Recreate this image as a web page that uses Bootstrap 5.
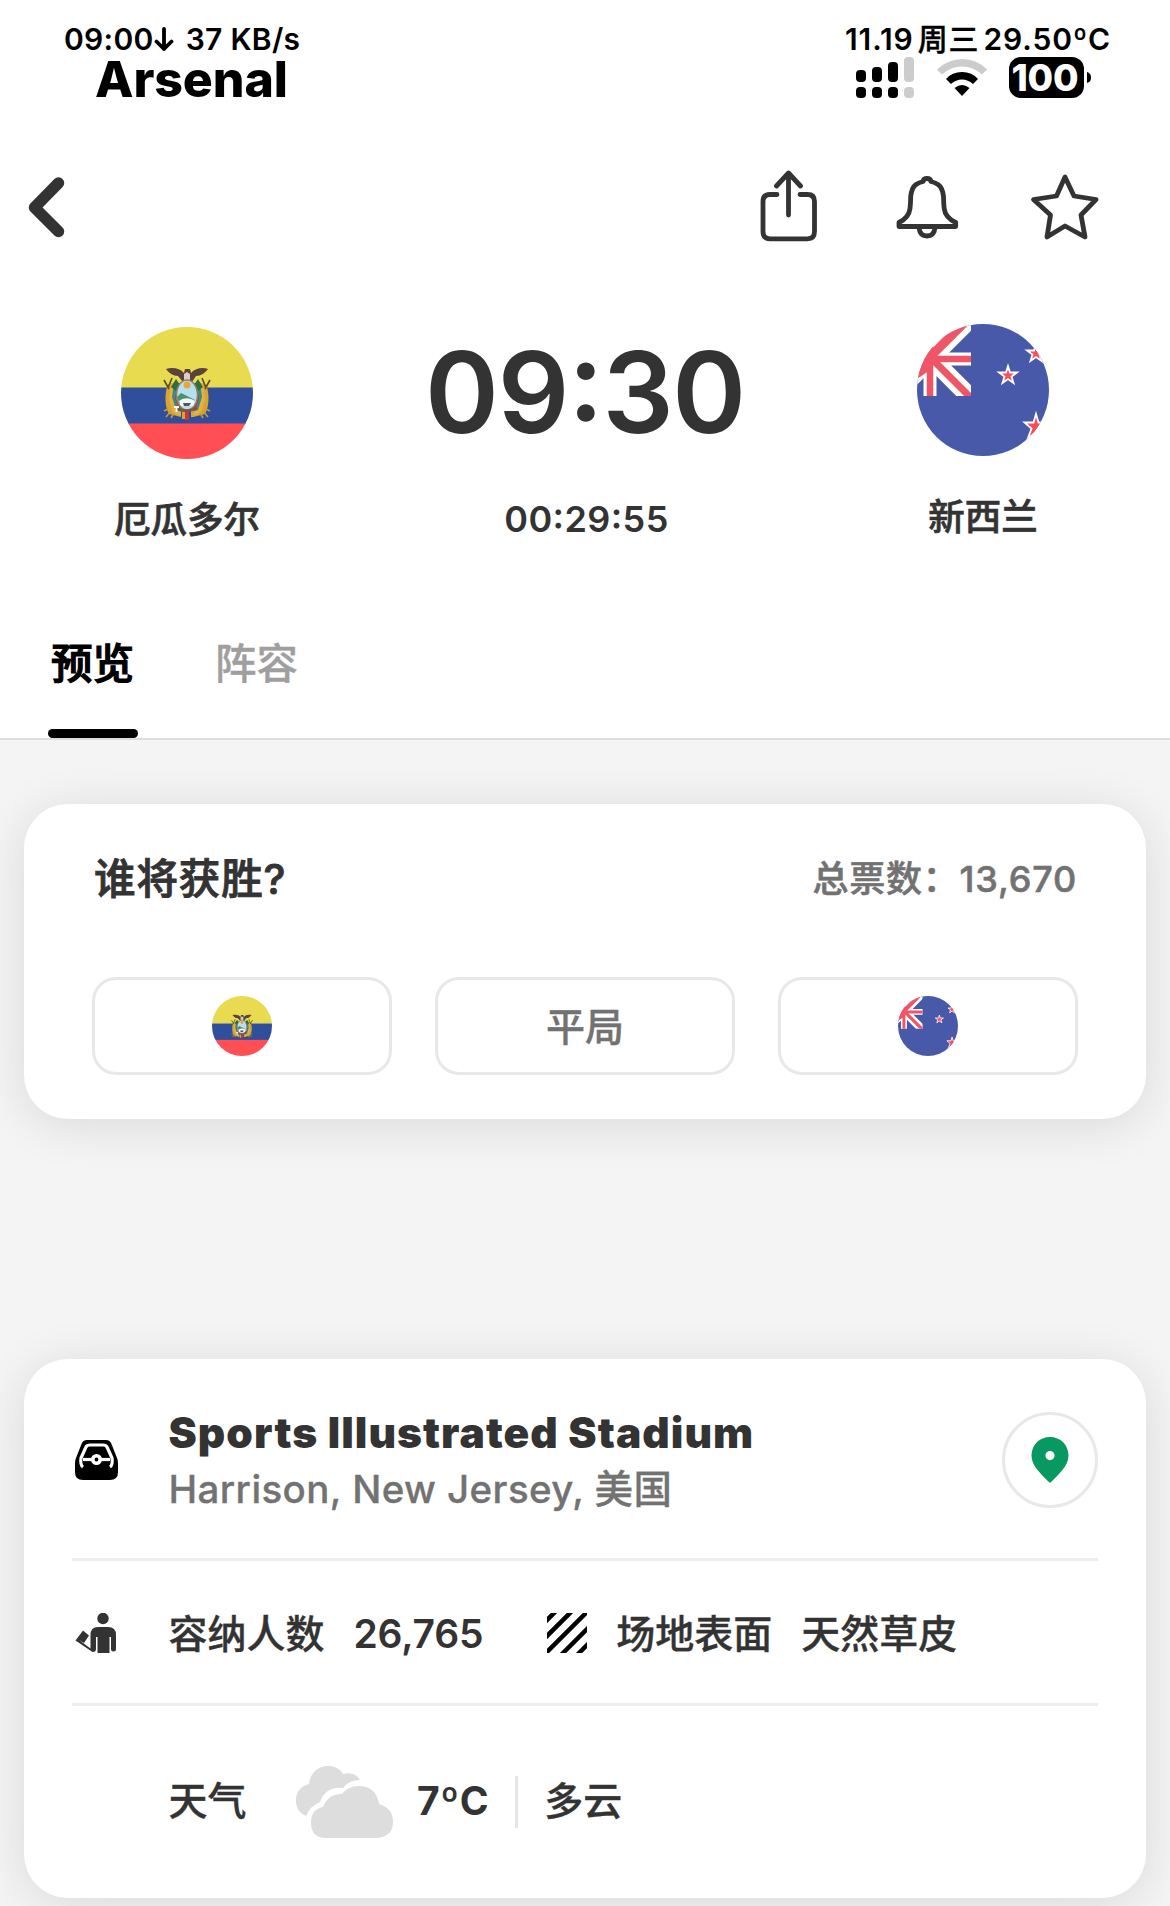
<!DOCTYPE html>
<html lang="zh-CN">
<head>
    <meta charset="UTF-8">
    <meta name="viewport" content="width=device-width, initial-scale=1.0">
    <title>厄瓜多尔 - 新西兰</title>
    <link href="https://cdn.jsdelivr.net/npm/bootstrap@5.3.0/dist/css/bootstrap.min.css" rel="stylesheet">
    <style>
        body {
            font-family: Inter, "Noto Sans CJK SC", sans-serif;
            background: #f4f4f4;
            color: #333;
            line-height: 1;
            overflow-x: hidden;
        }
        svg { display: block; flex: none; }
        .t { white-space: nowrap; }
        /* Reforça um pouco o traço dos caracteres chineses */
        .cn { font-weight: 500; -webkit-text-stroke: .35px currentColor; }

        /* Barra de status */
        .status-bar { height: 130px; padding: 22px 60px 0 64px; color: #000; }
        .status-line { font-size: 30px; height: 34px; line-height: 34px; font-weight: 600; letter-spacing: .3px; }
        .status-right { width: 265px; }
        .date-line { letter-spacing: .9px; }
        .carrier { font-size: 50px; height: 46px; line-height: 46px; font-weight: 800; padding-left: 31px; letter-spacing: -.1px; }
        .status-icons { padding-left: 11px; height: 42px; margin-top: 1px; }
        .wifi { margin: 0 17px 0 17px; }

        /* Cabeçalho */
        .app-top { height: 154px; padding: 0 70px 0 26px; }
        .back-icon { margin-top: 45px; }
        .action-icons { margin-top: 38px; }
        .match-head { height: 318px; padding-top: 40px; }
        .team-col { width: 374px; }
        .home-team { padding-top: 3px; }
        .team-name { font-size: 36.5px; height: 44px; line-height: 44px; margin-top: 39px; -webkit-text-stroke-width: .7px; }
        .kickoff, .countdown { font-weight: 600; font-feature-settings: "calt" 1; }
        .kickoff { font-size: 112px; height: 120px; line-height: 120px; letter-spacing: -1.3px; }
        .countdown { font-size: 36px; height: 44px; line-height: 44px; margin-top: 45px; letter-spacing: .4px; padding-left: 3px; }

        /* Abas */
        .tab-bar { height: 138px; padding-left: 48px; border-bottom: 2px solid #ddd; gap: 77px; }
        .tab-item { width: 90px; font-size: 41.5px; color: #9f9f9f; line-height: 60px; padding-top: 32px; }
        .tab-item.active { color: #000; -webkit-text-stroke-width: 1.2px; }
        .tab-label { padding-left: 3px; }
        .tab-line { height: 9px; border-radius: 5px; background: #000; }

        /* Cartões */
        .panel { margin: 0 24px; background: #fff; border-radius: 44px; box-shadow: 0 6px 50px rgba(0, 0, 0, .11); }
        .vote-panel { margin-top: 64px; height: 315px; padding: 48px 68px 0 68px; }
        .vote-title { font-size: 41.5px; line-height: 54px; letter-spacing: .9px; padding-left: 2px; -webkit-text-stroke-width: .9px; }
        .vote-total { font-size: 36px; color: #727272; line-height: 54px; letter-spacing: .8px; padding-right: 1px; -webkit-text-stroke-width: .6px; }
        .vote-btn { height: 98px; border: 3px solid #e8e8e8; border-radius: 24px; background: #fff; color: #727272; font-size: 39px; }
        .vote-row { gap: 43px; margin-top: 71px; }
        .venue-panel { margin-top: 240px; margin-bottom: 8px; height: 539px; padding: 0 48px; }
        .venue-row { border-bottom: 3px solid #eee; padding-top: 2px; }
        .row-main { height: 202px; }
        .row-facts { height: 145px; }
        .row-weather { height: 192px; padding-bottom: 3px; }
        .venue-name { font-size: 42.5px; font-weight: 900; line-height: 56px; letter-spacing: 1.05px; }
        .venue-city { font-size: 38.5px; font-weight: 500; color: #727272; line-height: 56px; letter-spacing: .4px; -webkit-text-stroke: .3px currentColor; }
        .venue-label { padding-top: 2px; }
        .venue-text { font-size: 39px; }
        .icon-cell { width: 96.5px; padding-left: 3px; flex: none; }
        .grass-icon { margin-left: 49px; }
        .fact-value { margin-left: 29px; font-weight: 600; letter-spacing: -.2px; }
        .surface-value { margin-left: 29px; }
        .pin-btn { width: 96px; height: 96px; border: 3px solid #e8e8e8; border-radius: 50%; }
        .cloud-icon { margin: 3px 23px 0 49.5px; }
        .temp-value { letter-spacing: .6px; }
        .weather-sep { width: 3px; height: 52px; background: #e5e5e5; margin: 3px 26px 0 26px; }
    </style>
</head>
<body>
    <!-- Símbolos usados mais de uma vez -->
    <svg width="0" height="0" class="position-absolute">
        <defs>
            <clipPath id="round"><circle cx="66" cy="66" r="66"/></clipPath>
            <symbol id="flag-ec" viewBox="0 0 132 132">
                <g clip-path="url(#round)">
                    <rect width="132" height="61" fill="#e8db50"/>
                    <rect y="60.500" width="132" height="37" fill="#2f4e9b"/>
                    <rect y="96.500" width="132" height="36" fill="#ff4f54"/>
                    <!-- brasão -->
                    <path d="M47 57C43 68 44 80 48 87l12 3V57zM85 57c4 11 3 23-1 30l-12 3V57z" fill="#d9a52e"/>
                    <path d="M50 56l-2 16 4 14 8 3V56zM82 56l2 16-4 14-8 3V56z" fill="#e0b443"/>
                    <path d="M53 56l-2 14 4 13 6 2V56zM79 56l2 14-4 13-6 2V56z" fill="#3b8a86"/>
                    <path d="M56 60l-2 12 4 11 3-2V60zM76 60l2 12-4 11-3-2V60z" fill="#c8323c"/>
                    <path d="M43 53l5 9M51 51l-4 10M89 53l-5 9M81 51l4 10" stroke="#5d4a2c" stroke-width="1.600"/>
                    <path d="M50 84l-5 6M47 82l-4 2M82 84l5 6M85 82l4 2M53 86l-3 5M79 86l3 5" stroke="#c79a3a" stroke-width="1.600"/>
                    <path d="M50 60l5-8 4 6-4 6zM82 60l-5-8-4 6 4 6z" fill="#2f6e3c"/>
                    <path d="M45 42c6-2 14-1 18 4l1-4h5l1 4c4-5 12-6 17-4-3 4-7 7-12 7l-4 6H62l-5-6c-5 0-9-3-12-7z" fill="#59433b"/>
                    <path d="M63 47l3-2 3 2v6h-6z" fill="#d9cfca"/>
                    <path d="M61 82h3v10h-3zM70 82h3v8h-3z" fill="#d5a92f"/>
                    <path d="M64 82h4v11h-4z" fill="#c73540"/>
                    <ellipse cx="66" cy="68" rx="10.500" ry="15" fill="#b6dfef" stroke="#8c8064" stroke-width="1.500"/>
                    <circle cx="66" cy="58" r="3.500" fill="#eba63b"/>
                    <path d="M56 70l4-4 14 7-2 3H58z" fill="#4d9168"/>
                    <path d="M58 74c6-4 11-3 16 0l-2 5H60z" fill="#eef6f6"/>
                    <path d="M62 76h8l-2 3h-5z" fill="#595459"/>
                    <path d="M57 82q9 4 19-1" stroke="#81534a" stroke-width="3" fill="none"/>
                    <path d="M53 80h5M55.500 80v5" stroke="#fff" stroke-width="1.800"/>
                </g>
            </symbol>
            <symbol id="flag-nz" viewBox="0 0 132 132">
                <g clip-path="url(#round)">
                    <rect width="132" height="132" fill="#4759a8"/>
                    <svg x="0" y="0" width="54" height="72" viewBox="0 0 54 72">
                        <path d="M60-12L-30 78M15 35L60 80" stroke="#fff" stroke-width="18"/>
                        <path d="M13-10v92M-10 35h74" stroke="#fff" stroke-width="13"/>
                        <path d="M62-16L-10 56" stroke="#ef5566" stroke-width="9"/>
                        <path d="M15 35L60 80" stroke="#ef5566" stroke-width="7"/>
                        <path d="M13 22v60M-10 35h74" stroke="#ef5566" stroke-width="6.500"/>
                        <path d="M0 35l16-13v22L0 55z" fill="#ef5566"/>
                    </svg>
                    <g fill="#ff4b57" stroke="#fff" stroke-width="1.800">
                        <path id="nz-star" d="M91 42l2 6.500h7l-5.500 4 2 6.500-5.500-4-5.500 4 2-6.500-5.500-4h7z"/>
                        <use href="#nz-star" x="28" y="-22"/>
                        <path d="M119 90l2.500 8.500h9l-7 5.500 2.500 9-7-5-8 6 3.500-9.500-7-6h9z"/>
                    </g>
                </g>
            </symbol>
        </defs>
    </svg>

    <header class="bg-white">
        <div class="status-bar d-flex justify-content-between">
            <div>
                <div class="status-line d-flex align-items-center t">09:00<svg width="20" height="26" viewBox="0 0 20 26" fill="none" stroke="#000" stroke-width="3.800" stroke-linecap="round" stroke-linejoin="round"><path d="M10 3v20M2.500 15.500L10 23l7.500-7.500"/></svg><span class="ps-2 ms-1">37 KB/s</span></div>
                <div class="carrier t">Arsenal</div>
            </div>
            <div class="status-right">
                <div class="status-line date-line d-flex t"><span>11.19</span><span class="cn px-1">周三</span><span>29.50ºC</span></div>
                <div class="status-icons d-flex">
                    <svg width="59" height="42" viewBox="0 0 59 42">
                        <rect x="0" y="13" width="10" height="12" rx="4"/><rect x="16" y="10" width="10" height="15" rx="4"/><rect x="32" y="5" width="10" height="20" rx="4"/>
                        <rect x="0" y="30" width="10" height="11" rx="4"/><rect x="16" y="30" width="10" height="11" rx="4"/><rect x="32" y="30" width="10" height="11" rx="4"/>
                        <rect x="48" y="0" width="10" height="25" rx="4" fill="#ccc"/><rect x="48" y="30" width="10" height="11" rx="4" fill="#ccc"/>
                    </svg>
                    <svg class="wifi" width="60" height="42" viewBox="-5 0 60 42">
                        <path d="M0 12.500Q11 2 25.500 2T50 12.500L45 17.500Q36 9.500 25 9.500T5 17.500z" fill="#ccc"/>
                        <path d="M9 22Q15 15 25 15T41 22L36 27Q31 22.500 25 22.500T14 27z"/>
                        <path d="M17.500 31Q25 25 32.500 31L25 39z"/>
                    </svg>
                    <svg class="overflow-visible" width="84" height="42" viewBox="0 0 84 42">
                        <rect width="75" height="41" rx="12"/>
                        <path d="M78 15q4 1 4 5.500T78 26z"/>
                        <text x="36" y="34" fill="#fff" font-size="37" font-weight="800" text-anchor="middle" textLength="67">100</text>
                    </svg>
                </div>
            </div>
        </div>

        <nav class="app-top d-flex justify-content-between">
            <svg class="back-icon" width="42" height="64" viewBox="26 175 42 64" fill="none" stroke="#333" stroke-width="11.500" stroke-linecap="round" stroke-linejoin="round"><path d="M58.500 183L34.500 207.500l24 24"/></svg>
            <svg class="action-icons" width="344" height="80" viewBox="756 168 344 80" fill="none" stroke="#333" stroke-width="4.800" stroke-linecap="round" stroke-linejoin="round">
                <path d="M777 194.500h-7q-7 0-7 7v30q0 7.300 7 7.300h37.500q7 0 7-7.300v-30q0-7-7-7h-7.500M788.500 174v41M776.500 186l12-13 12 13"/>
                <path d="M899 226.500v-4q10-5 11-14 .500-4 .700-12 1-9 5.300-12 3-2 7-3 .500-3 4-3t4 3q4 1 7 3 4.500 3 5.500 12 .200 8 .700 12 1 9 11.500 14v4zM919 228q1 8 8 8t8-8"/>
                <path d="M1065 177l9 19 22 3.500-15 15.500 4 22-20-11-18 11 3.500-22-17-15.500 23-3.500z"/>
            </svg>
        </nav>

        <section class="match-head d-flex justify-content-between text-center">
            <div class="team-col home-team d-flex flex-column align-items-center">
                <svg width="132" height="132"><use href="#flag-ec"/></svg>
                <div class="team-name cn t">厄瓜多尔</div>
            </div>
            <div class="d-flex flex-column align-items-center pt-2">
                <div class="kickoff t">09:30</div>
                <div class="countdown t">00:29:55</div>
            </div>
            <div class="team-col d-flex flex-column align-items-center">
                <svg width="132" height="132"><use href="#flag-nz"/></svg>
                <div class="team-name cn t">新西兰</div>
            </div>
        </section>

        <div class="tab-bar d-flex">
            <div class="tab-item cn active d-flex flex-column justify-content-between t"><span class="tab-label">预览</span><div class="tab-line"></div></div>
            <div class="tab-item cn t">阵容</div>
        </div>
    </header>

    <!-- Votação -->
    <section class="panel vote-panel">
        <div class="d-flex justify-content-between">
            <div class="vote-title cn t">谁将获胜?</div>
            <div class="vote-total cn t">总票数：13,670</div>
        </div>
        <div class="vote-row d-flex">
            <button class="vote-btn flex-fill w-100 d-flex align-items-center justify-content-center"><svg width="60" height="60"><use href="#flag-ec"/></svg></button>
            <button class="vote-btn cn flex-fill w-100">平局</button>
            <button class="vote-btn flex-fill w-100 d-flex align-items-center justify-content-center"><svg width="60" height="60"><use href="#flag-nz"/></svg></button>
        </div>
    </section>

    <!-- Estádio -->
    <section class="panel venue-panel">
        <div class="venue-row row-main d-flex align-items-center">
            <div class="icon-cell">
                <svg width="43" height="40" viewBox="0 0 43 40">
                    <path d="M12 0h19q4 0 5.500 4L42 18q1 2 1 5v9q0 8-8 8H8q-8 0-8-8v-9q0-3 1-5L6.500 4Q8 0 12 0z"/>
                    <path d="M8 27q-3-2-2-9l5-11q1-2 4-2h13q3 0 4 2l5 11q1 7-2 9" fill="none" stroke="#fff" stroke-width="3.200"/>
                    <path d="M8 19.500h27" stroke="#fff" stroke-width="3.200"/>
                    <circle cx="21.500" cy="19.500" r="3.700" stroke="#fff" stroke-width="3.600"/>
                </svg>
            </div>
            <div class="venue-label flex-grow-1">
                <div class="venue-name t">Sports Illustrated Stadium</div>
                <div class="venue-city t">Harrison, New Jersey, 美国</div>
            </div>
            <div class="pin-btn d-flex align-items-center justify-content-center">
                <svg width="38" height="46" viewBox="0 0 38 46"><path fill="#089861" fill-rule="evenodd" d="M19 0C8.500 0 .500 8 .500 18.500.500 29 10 37 19 46c9-9 18.500-17 18.500-27.500C37.500 8 29.500 0 19 0zm0 14a4.600 4.600 0 110 9.200 4.600 4.600 0 010-9.200z"/></svg>
            </div>
        </div>
        <div class="venue-row row-facts venue-text d-flex align-items-center">
            <div class="icon-cell">
                <svg width="42" height="40" viewBox="0 0 42 40" fill="#333">
                    <circle cx="28" cy="5.500" r="5.700"/>
                    <path d="M23 14h10q8 0 8 8v14q0 2.500-2.500 2.500T36 36V24h-1.500v16h-12V24H21v12q0 3-3 3-1 0-2-1L.500 27.500 8 17.500l6 5-5 7.500-5-3 11.500 8.500V22q0-8 7.500-8z"/>
                </svg>
            </div>
            <span class="cn t">容纳人数</span>
            <span class="fact-value t">26,765</span>
            <svg class="grass-icon" width="56" height="40" viewBox="-15 0 56 40">
                <svg width="40" height="40" viewBox="0 0 40 40"><path d="M-3 10L10-3M-2 25L25-2M1 38L38 1M15 41L41 15M31 41L41 31" stroke="#000" stroke-width="4.500" stroke-linecap="round"/></svg>
            </svg>
            <span class="cn t ms-4 ps-1">场地表面</span>
            <span class="cn t surface-value">天然草皮</span>
        </div>
        <div class="row-weather venue-text d-flex align-items-center">
            <div class="icon-cell"></div>
            <span class="cn t">天气</span>
            <svg class="cloud-icon" width="98" height="72" viewBox="0 0 98 72" fill="#ddd">
                <path d="M10 50C2 46 0 41 0 34 0 26 5 20 13 18 14 7 22 0 32 0q10 0 15 8 12-3 17 6-11 0-17 8-17-2-23 14-10 4-14 14z"/>
                <path d="M29 72q-14-1-14-15 0-14 12-16 5-13 19-13 6-8 17-8 17 0 20 18 14 4 14 18 0 14-15 16z"/>
            </svg>
            <span class="temp-value t fw-bold">7ºC</span>
            <div class="weather-sep"></div>
            <span class="cn t">多云</span>
        </div>
    </section>
    <script src="https://cdn.jsdelivr.net/npm/bootstrap@5.3.0/dist/js/bootstrap.bundle.min.js"></script>
</body>
</html>
